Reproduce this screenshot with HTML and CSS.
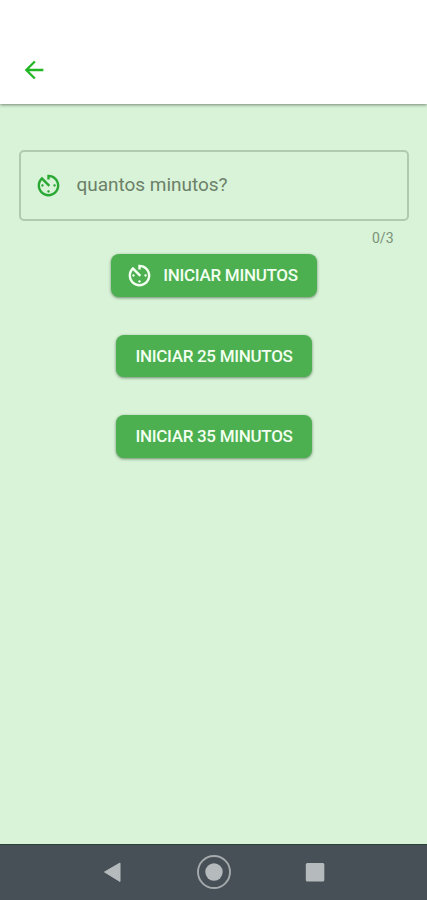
FILE: index.html
```html
<!DOCTYPE html>
<html lang="pt-BR">
  <head>
    <meta charset="UTF-8" />
    <meta name="viewport" content="width=device-width, initial-scale=1.0" />
    <title>Minutos</title>
    <link rel="stylesheet" href="styles.css">
  </head>
  <body>
    <div class="app">
      <header class="appbar">
        <svg class="back" viewBox="0 0 24 24">
          <path d="M20 11H7.83l5.59-5.59L12 4l-8 8 8 8 1.41-1.41L7.83 13H20v-2z" />
        </svg>
      </header>

      <main class="content">
        <div class="field">
          <svg class="timer" viewBox="0 0 24 24">
            <path d="M11 17c0 .55.45 1 1 1s1-.45 1-1-.45-1-1-1-1 .45-1 1zm0-14v4h2V5.08c3.39.49 6 3.39 6 6.92 0 3.87-3.13 7-7 7s-7-3.13-7-7c0-1.68.59-3.22 1.58-4.42L12 13l1.41-1.41-6.8-6.8v.02C4.42 6.45 3 9.05 3 12c0 4.97 4.02 9 9 9 4.97 0 9-4.03 9-9s-4.03-9-9-9h-1zm7 9c0-.55-.45-1-1-1s-1 .45-1 1 .45 1 1 1 1-.45 1-1zM6 12c0 .55.45 1 1 1s1-.45 1-1-.45-1-1-1-1 .45-1 1z" />
          </svg>
          <span class="label">quantos minutos?</span>
        </div>
        <div class="counter">0/3</div>

        <div class="buttons">
          <button class="btn btn-icon">
            <svg class="timer" viewBox="0 0 24 24">
              <path d="M11 17c0 .55.45 1 1 1s1-.45 1-1-.45-1-1-1-1 .45-1 1zm0-14v4h2V5.08c3.39.49 6 3.39 6 6.92 0 3.87-3.13 7-7 7s-7-3.13-7-7c0-1.68.59-3.22 1.58-4.42L12 13l1.41-1.41-6.8-6.8v.02C4.42 6.45 3 9.05 3 12c0 4.97 4.02 9 9 9 4.97 0 9-4.03 9-9s-4.03-9-9-9h-1zm7 9c0-.55-.45-1-1-1s-1 .45-1 1 .45 1 1 1 1-.45 1-1zM6 12c0 .55.45 1 1 1s1-.45 1-1-.45-1-1-1-1 .45-1 1z" />
            </svg>
            <span>INICIAR MINUTOS</span>
          </button>
          <button class="btn"><span>INICIAR 25 MINUTOS</span></button>
          <button class="btn"><span>INICIAR 35 MINUTOS</span></button>
        </div>
      </main>

      <nav class="navbar">
        <svg viewBox="0 0 36 36">
          <path d="M9.5 18L25 9v18.5z" stroke-width="1" stroke-linejoin="round" />
        </svg>
        <svg viewBox="0 0 36 36">
          <circle cx="18" cy="18" r="8.7" />
          <circle class="ring" cx="18" cy="18" r="16" />
        </svg>
        <svg viewBox="0 0 36 36">
          <rect x="8.8" y="9" width="18.5" height="18.5" rx="1.5" />
        </svg>
      </nav>
    </div>
  </body>
</html>
```

FILE: styles.css
```css
* {
  margin: 0;
  padding: 0;
  box-sizing: border-box;
}
body {
  font-family: Roboto, "Liberation Sans", sans-serif;
  background: #d8f3d7;
}
.app {
  height: 900px;
  display: flex;
  flex-direction: column;
}
.appbar {
  height: 104px;
  padding: 56px 0 0 20px;
  background: #fff;
  box-shadow: 0 1px 3px rgba(0, 0, 0, 0.45);
}
.back {
  display: block;
  width: 28px;
  height: 28px;
  fill: #22b524;
}
.content {
  flex: 1;
  padding: 46px 18px 0 19px;
}
.field {
  height: 71px;
  display: flex;
  align-items: center;
  gap: 14px;
  padding-left: 12.5px;
  border: 2px solid #afcaae;
  border-radius: 5px;
}
.timer {
  width: 29px;
  height: 29px;
  flex: none;
  fill: #29a834;
}
.label {
  font-size: 19px;
  line-height: 24px;
  letter-spacing: -0.02px;
  padding-bottom: 1px;
  color: #6c8069;
}
.counter {
  height: 33px;
  padding: 9px 15.5px 0 0;
  text-align: right;
  font-size: 14px;
  line-height: 17px;
  color: #7b9179;
}
.buttons {
  display: flex;
  flex-direction: column;
  align-items: center;
  gap: 38px;
}
.btn {
  width: 196px;
  height: 42.5px;
  display: flex;
  align-items: center;
  justify-content: center;
  border: none;
  border-radius: 8px;
  background: #4caf50;
  box-shadow: 0 1px 3px rgba(0, 40, 0, 0.5);
  color: #f3fff0;
  font-family: inherit;
  font-size: 17px;
  font-weight: 500;
  letter-spacing: -0.3px;
  white-space: nowrap;
}
.btn-icon {
  width: 206px;
  gap: 9px;
  padding-right: 5px;
}
.btn .timer {
  fill: #f3fff0;
}
.navbar {
  height: 56px;
  display: flex;
  justify-content: center;
  align-items: center;
  gap: 65px;
  padding-bottom: 2px;
  background: #475056;
  border-top: 1px solid #2f4039;
}
.navbar svg {
  width: 36px;
  height: 36px;
  fill: #b5bbbd;
  stroke: none;
}
.navbar path {
  stroke: #b5bbbd;
}
.navbar .ring {
  fill: none;
  stroke: #a5abad;
  stroke-width: 1.9;
}
```
